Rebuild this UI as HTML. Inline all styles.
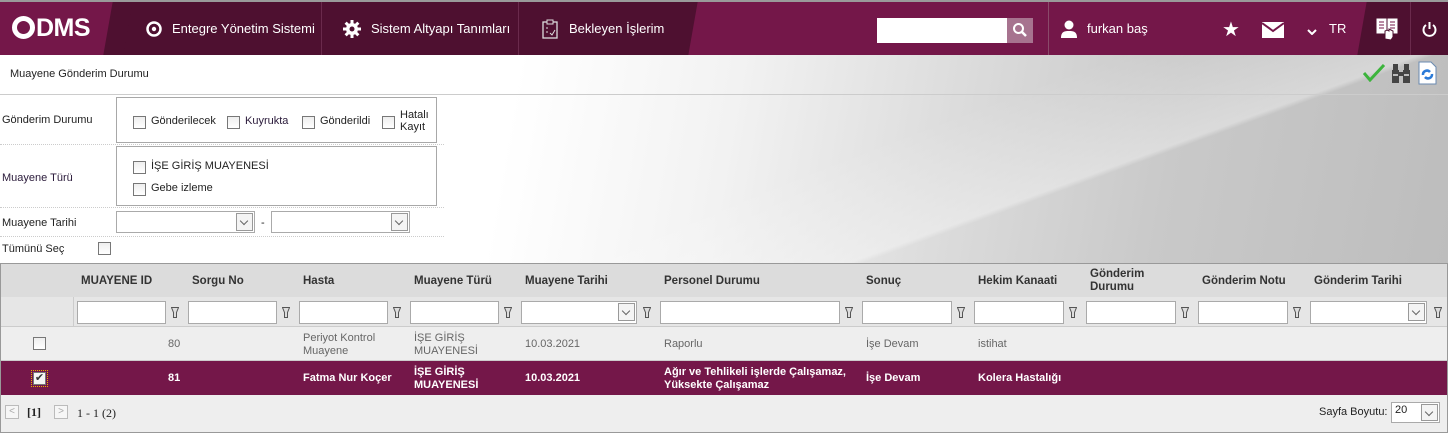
<!DOCTYPE html>
<html><head><meta charset="utf-8">
<style>
*{box-sizing:border-box;margin:0;padding:0}
body{width:1448px;height:433px;overflow:hidden;font-family:"Liberation Sans","DejaVu Sans",sans-serif;font-size:11px;color:#222;position:relative;background:#fff}
.a{position:absolute}
#hdr{left:0;top:0;width:1448px;height:55px;background:#741749;border-top:2px solid #9a9a9a;overflow:hidden}
.nav{color:#fff;font-size:13px;top:0;height:53px;line-height:53px}
#bg{left:0;top:55px;width:1448px;height:208px;background:linear-gradient(100deg,#fff 0%,#fff 35%,#f2f2f2 50%,#dcdcdc 65%,#c9c9c9 80%,#bdbdbd 100%)}
#bg2{left:520px;top:55px;width:928px;height:208px;background:linear-gradient(160deg,rgba(255,255,255,0) 40%,rgba(255,255,255,.35) 60%,rgba(0,0,0,0) 61%)}
.cb{width:13px;height:13px;border:1px solid #777;background:linear-gradient(#eee,#fff)}
.lbl{font-size:11px;color:#222}
.box{border:1px solid #a8a8a8;background:#fff}
.dot{border-bottom:1px dotted #ccc}
.sel{height:22px;border:1px solid #aaa;background:#fff}
.sel i{position:absolute;right:1px;top:1px;width:17px;height:18px;border:1px solid #999;background:#f4f4f4}
.sel i:after{content:"";position:absolute;left:4px;top:4px;width:5px;height:5px;border-right:1px solid #666;border-bottom:1px solid #666;transform:rotate(45deg)}
#grid{left:0;top:263px;width:1448px;height:170px;border:1px solid #999;background:#eee}
.th{font-weight:bold;color:#333;font-size:11.5px}
.fi{height:23px;border:1px solid #aaa;background:#fff;top:37px}
.fun{top:43px;width:8px;height:11px}
.r1{color:#666}
.r2{color:#fff;font-weight:bold}
</style></head><body>
<div id="hdr" class="a">
 <div class="a" style="left:118px;top:0;width:565px;height:53px;background:#4e1030"></div>
 <div class="a" style="left:108px;top:0;width:20px;height:53px;background:#4e1030;transform:skewX(-10deg)"></div>
 <div class="a" style="left:673px;top:0;width:20px;height:53px;background:#4e1030;transform:skewX(-10deg)"></div>
 <div class="a" style="left:1372px;top:0;width:76px;height:53px;background:#4e1030"></div>
 <div class="a" style="left:1362px;top:0;width:20px;height:53px;background:#4e1030;transform:skewX(-10deg)"></div>
 <div class="a" style="left:321px;top:0;width:1px;height:53px;background:#6a2a4c"></div>
 <div class="a" style="left:518px;top:0;width:1px;height:53px;background:#6a2a4c"></div>
 <div class="a" style="left:1048px;top:0;width:1px;height:53px;background:#8a4a6a"></div>
 <div class="a" style="left:1410px;top:0;width:1px;height:53px;background:#6a2a4c"></div>
 <div class="a" style="left:12px;top:10px;color:#fff;font-weight:bold;font-size:25px;letter-spacing:-0.5px;line-height:32px"><span style="display:inline-block;width:23px;height:23px;border:5px solid #fff;border-radius:50%;vertical-align:-3px;margin-right:1px"></span>DMS</div>
 <svg class="a" style="left:146px;top:19px" width="16" height="16"><circle cx="8" cy="8" r="6.5" fill="none" stroke="#fff" stroke-width="2.5"/><circle cx="8" cy="8" r="2.2" fill="#fff"/></svg>
 <div class="a nav" style="left:172px">Entegre Yönetim Sistemi</div>
 <svg class="a" style="left:343px;top:18px" width="18" height="18" viewBox="0 0 18 18"><g fill="#fff"><circle cx="9" cy="9" r="6"/><rect x="7.5" y="0" width="3" height="18"/><rect x="0" y="7.5" width="18" height="3"/><rect x="7.5" y="0" width="3" height="18" transform="rotate(45 9 9)"/><rect x="7.5" y="0" width="3" height="18" transform="rotate(-45 9 9)"/></g><circle cx="9" cy="9" r="2.5" fill="#4e1030"/></svg>
 <div class="a nav" style="left:371px">Sistem Altyapı Tanımları</div>
 <svg class="a" style="left:542px;top:17px" width="16" height="20"><rect x="1" y="3" width="14" height="16" fill="none" stroke="#ddd" stroke-width="1.3"/><rect x="5" y="1" width="6" height="4" fill="#4e1030" stroke="#ddd"/><path d="M4 9h2M4 13h2M8 14l2 2 3-5" stroke="#ddd" fill="none"/></svg>
 <div class="a nav" style="left:569px">Bekleyen İşlerim</div>
 <div class="a" style="left:877px;top:16px;width:130px;height:25px;background:#fff"></div>
 <div class="a" style="left:1007px;top:16px;width:26px;height:25px;background:#a7738f"></div>
 <svg class="a" style="left:1012px;top:20px" width="16" height="16"><circle cx="6.5" cy="6.5" r="4.5" fill="none" stroke="#fff" stroke-width="2"/><path d="M10 10l4 4" stroke="#fff" stroke-width="2.5"/></svg>
 <svg class="a" style="left:1061px;top:17px" width="16" height="19"><circle cx="8" cy="6" r="4.5" fill="#fff"/><path d="M0 19c0-6 3-7 8-7s8 1 8 7z" fill="#fff"/></svg>
 <div class="a nav" style="left:1087px">furkan baş</div>
 <div class="a" style="left:1222px;top:15px;color:#fff;font-size:20px">★</div>
 <svg class="a" style="left:1262px;top:20px" width="22" height="16"><rect width="22" height="16" fill="#fff"/><path d="M0 1l11 8 11-8" stroke="#741749" stroke-width="2" fill="none"/></svg>
 <svg class="a" style="left:1307px;top:27px" width="10" height="6"><path d="M1 1l4 4 4-4" stroke="#fff" stroke-width="2" fill="none"/></svg>
 <div class="a nav" style="left:1329px;font-size:13px">TR</div>
 <svg class="a" style="left:1376px;top:15px" width="22" height="24"><path d="M1 2h9v14H1zM12 2h9v14h-9z" fill="#fff" stroke="#fff"/><path d="M3 5h5M3 8h5M3 11h5M14 5h5M14 8h5M14 11h5" stroke="#741749"/><path d="M9 22v-8l2 -1 2 1v-2l2 1 2 1v6l-2 3z" fill="#fff" stroke="#4e1030"/></svg>
 <svg class="a" style="left:1422px;top:19px" width="15" height="16"><path d="M4 4a6 6 0 1 0 7 0" stroke="#fff" stroke-width="2" fill="none"/><path d="M7.5 1v7" stroke="#fff" stroke-width="2"/></svg>
</div>
<div id="bg" class="a"></div>
<div id="bg2" class="a"></div>
<div class="a" style="left:10px;top:68px;font-size:11px">Muayene Gönderim Durumu</div>
<svg class="a" style="left:1363px;top:64px" width="22" height="18"><path d="M1 9l6 7L21 1" stroke="#3cb43c" stroke-width="3" fill="none"/></svg>
<svg class="a" style="left:1391px;top:62px" width="20" height="22"><g fill="#444"><rect x="1" y="8" width="7" height="13"/><rect x="12" y="8" width="7" height="13"/><rect x="2" y="2" width="5" height="6"/><rect x="13" y="2" width="5" height="6"/><rect x="8" y="10" width="4" height="4"/></g><g fill="#bbb"><rect x="2" y="12" width="5" height="2"/><rect x="13" y="12" width="5" height="2"/></g></svg>
<svg class="a" style="left:1418px;top:61px" width="19" height="24"><path d="M1 1h12l5 5v17H1z" fill="#fff" stroke="#6a8ab0"/><path d="M5 14a4 4 0 0 1 7-3M14 13a4 4 0 0 1-7 3" stroke="#2a7ad8" stroke-width="2.5" fill="none"/></svg>
<div class="a" style="left:0;top:94px;width:1448px;border-top:1px solid #ccc"></div>
<div class="a lbl" style="left:2px;top:114px">Gönderim Durumu</div>
<div class="a box" style="left:116px;top:97px;width:321px;height:46px"></div>
<div class="a cb" style="left:133px;top:116px"></div><div class="a lbl" style="left:151px;top:115px">Gönderilecek</div>
<div class="a cb" style="left:227px;top:116px"></div><div class="a lbl" style="left:245px;top:115px;color:#2a1a3a">Kuyrukta</div>
<div class="a cb" style="left:302px;top:116px"></div><div class="a lbl" style="left:320px;top:115px">Gönderildi</div>
<div class="a cb" style="left:382px;top:116px"></div><div class="a lbl" style="left:400px;top:109px;line-height:12px">Hatalı<br>Kayıt</div>
<div class="a dot" style="left:0;top:144px;width:444px"></div>
<div class="a lbl" style="left:2px;top:172px;color:#2a1a3a">Muayene Türü</div>
<div class="a box" style="left:116px;top:146px;width:321px;height:60px"></div>
<div class="a cb" style="left:133px;top:161px"></div><div class="a lbl" style="left:151px;top:160px">İŞE GİRİŞ MUAYENESİ</div>
<div class="a cb" style="left:133px;top:183px"></div><div class="a lbl" style="left:151px;top:182px">Gebe izleme</div>
<div class="a dot" style="left:0;top:207px;width:444px"></div>
<div class="a lbl" style="left:2px;top:217px">Muayene Tarihi</div>
<div class="a sel" style="left:116px;top:211px;width:139px"><i></i></div>
<div class="a lbl" style="left:261px;top:217px">-</div>
<div class="a sel" style="left:271px;top:211px;width:139px"><i></i></div>
<div class="a dot" style="left:0;top:236px;width:444px"></div>
<div class="a lbl" style="left:2px;top:243px">Tümünü Seç</div>
<div class="a cb" style="left:98px;top:242px"></div>

<div id="grid" class="a">
 <div class="a" style="left:0;top:0;width:1446px;height:33px;background:#dcdcdc"></div>
 <div class="a" style="left:0;top:33px;width:1446px;height:30px;background:#e6e6e6;border-bottom:1px solid #ccc"></div>
 <div class="a" style="left:0;top:63px;width:1446px;height:34px;background:#eee;border-bottom:1px solid #ccc"></div>
 <div class="a" style="left:0;top:97px;width:1446px;height:34px;background:#741749"></div>
 <div class="a th" style="left:80px;top:11px">MUAYENE ID</div>
 <div class="a th" style="left:191px;top:11px">Sorgu No</div>
 <div class="a th" style="left:302px;top:11px">Hasta</div>
 <div class="a th" style="left:413px;top:11px">Muayene Türü</div>
 <div class="a th" style="left:524px;top:11px">Muayene Tarihi</div>
 <div class="a th" style="left:663px;top:11px">Personel Durumu</div>
 <div class="a th" style="left:865px;top:11px">Sonuç</div>
 <div class="a th" style="left:977px;top:11px">Hekim Kanaati</div>
 <div class="a th" style="left:1089px;top:4px;line-height:13px">Gönderim<br>Durumu</div>
 <div class="a th" style="left:1201px;top:11px">Gönderim Notu</div>
 <div class="a th" style="left:1313px;top:11px">Gönderim Tarihi</div>
 <div class="a" style="left:72px;top:33px;width:1px;height:30px;background:#ccc"></div>
 <div class="a fi" style="left:76px;width:89px"></div>
 <div class="a fi" style="left:187px;width:89px"></div>
 <div class="a fi" style="left:298px;width:89px"></div>
 <div class="a fi" style="left:409px;width:89px"></div>
 <div class="a fi sel" style="left:520px;width:116px;height:23px;top:37px"><i></i></div>
 <div class="a fi" style="left:659px;width:180px"></div>
 <div class="a fi" style="left:861px;width:90px"></div>
 <div class="a fi" style="left:973px;width:90px"></div>
 <div class="a fi" style="left:1085px;width:90px"></div>
 <div class="a fi" style="left:1197px;width:90px"></div>
 <div class="a fi sel" style="left:1309px;width:117px;height:23px;top:37px"><i></i></div>
 <svg class="a fun" style="left:170px"><path d="M0.5 0.5h7l-2 5v5h-3v-5z" fill="#ddd" stroke="#555"/></svg>
 <svg class="a fun" style="left:281px"><path d="M0.5 0.5h7l-2 5v5h-3v-5z" fill="#ddd" stroke="#555"/></svg>
 <svg class="a fun" style="left:392px"><path d="M0.5 0.5h7l-2 5v5h-3v-5z" fill="#ddd" stroke="#555"/></svg>
 <svg class="a fun" style="left:503px"><path d="M0.5 0.5h7l-2 5v5h-3v-5z" fill="#ddd" stroke="#555"/></svg>
 <svg class="a fun" style="left:642px"><path d="M0.5 0.5h7l-2 5v5h-3v-5z" fill="#ddd" stroke="#555"/></svg>
 <svg class="a fun" style="left:844px"><path d="M0.5 0.5h7l-2 5v5h-3v-5z" fill="#ddd" stroke="#555"/></svg>
 <svg class="a fun" style="left:956px"><path d="M0.5 0.5h7l-2 5v5h-3v-5z" fill="#ddd" stroke="#555"/></svg>
 <svg class="a fun" style="left:1068px"><path d="M0.5 0.5h7l-2 5v5h-3v-5z" fill="#ddd" stroke="#555"/></svg>
 <svg class="a fun" style="left:1180px"><path d="M0.5 0.5h7l-2 5v5h-3v-5z" fill="#ddd" stroke="#555"/></svg>
 <svg class="a fun" style="left:1292px"><path d="M0.5 0.5h7l-2 5v5h-3v-5z" fill="#ddd" stroke="#555"/></svg>
 <svg class="a fun" style="left:1433px"><path d="M0.5 0.5h7l-2 5v5h-3v-5z" fill="#ddd" stroke="#555"/></svg>
 <div class="a cb" style="left:32px;top:73px"></div>
 <div class="a r1" style="left:167px;top:74px">80</div>
 <div class="a r1" style="left:302px;top:68px;line-height:13px">Periyot Kontrol<br>Muayene</div>
 <div class="a r1" style="left:413px;top:68px;line-height:13px">İŞE GİRİŞ<br>MUAYENESİ</div>
 <div class="a r1" style="left:524px;top:74px">10.03.2021</div>
 <div class="a r1" style="left:663px;top:74px">Raporlu</div>
 <div class="a r1" style="left:865px;top:74px">İşe Devam</div>
 <div class="a r1" style="left:977px;top:74px">istihat</div>
 <div class="a" style="left:30px;top:106px;width:17px;height:17px;border:1px dotted #e8b000"></div>
 <div class="a cb" style="left:32px;top:108px;background:#f4f4f4;color:#333;font-size:11px;line-height:11px;text-align:center">✔</div>
 <div class="a r2" style="left:167px;top:108px">81</div>
 <div class="a r2" style="left:302px;top:108px">Fatma Nur Koçer</div>
 <div class="a r2" style="left:413px;top:102px;line-height:13px">İŞE GİRİŞ<br>MUAYENESİ</div>
 <div class="a r2" style="left:524px;top:108px">10.03.2021</div>
 <div class="a r2" style="left:663px;top:102px;line-height:13px">Ağır ve Tehlikeli işlerde Çalışamaz,<br>Yüksekte Çalışamaz</div>
 <div class="a r2" style="left:865px;top:108px">İşe Devam</div>
 <div class="a r2" style="left:977px;top:108px">Kolera Hastalığı</div>
 <div class="a" style="left:4px;top:141px;width:14px;height:14px;border:1px solid #bbb;background:#f6f6f6;color:#aaa;font-size:10px;line-height:12px;text-align:center">&lt;</div>
 <div class="a" style="left:26px;top:141px;font-weight:bold;font-size:12px;font-family:'Liberation Serif',serif">[1]</div>
 <div class="a" style="left:53px;top:141px;width:14px;height:14px;border:1px solid #bbb;background:#f6f6f6;color:#aaa;font-size:10px;line-height:12px;text-align:center">&gt;</div>
 <div class="a" style="left:76px;top:142px;font-size:12px;font-family:'Liberation Serif',serif">1 - 1 (2)</div>
 <div class="a" style="left:1318px;top:142px">Sayfa Boyutu:</div>
 <div class="a sel" style="left:1390px;top:138px;width:49px;height:21px;padding:1px 3px">20<i style="height:17px"></i></div>
</div>
</body></html>
